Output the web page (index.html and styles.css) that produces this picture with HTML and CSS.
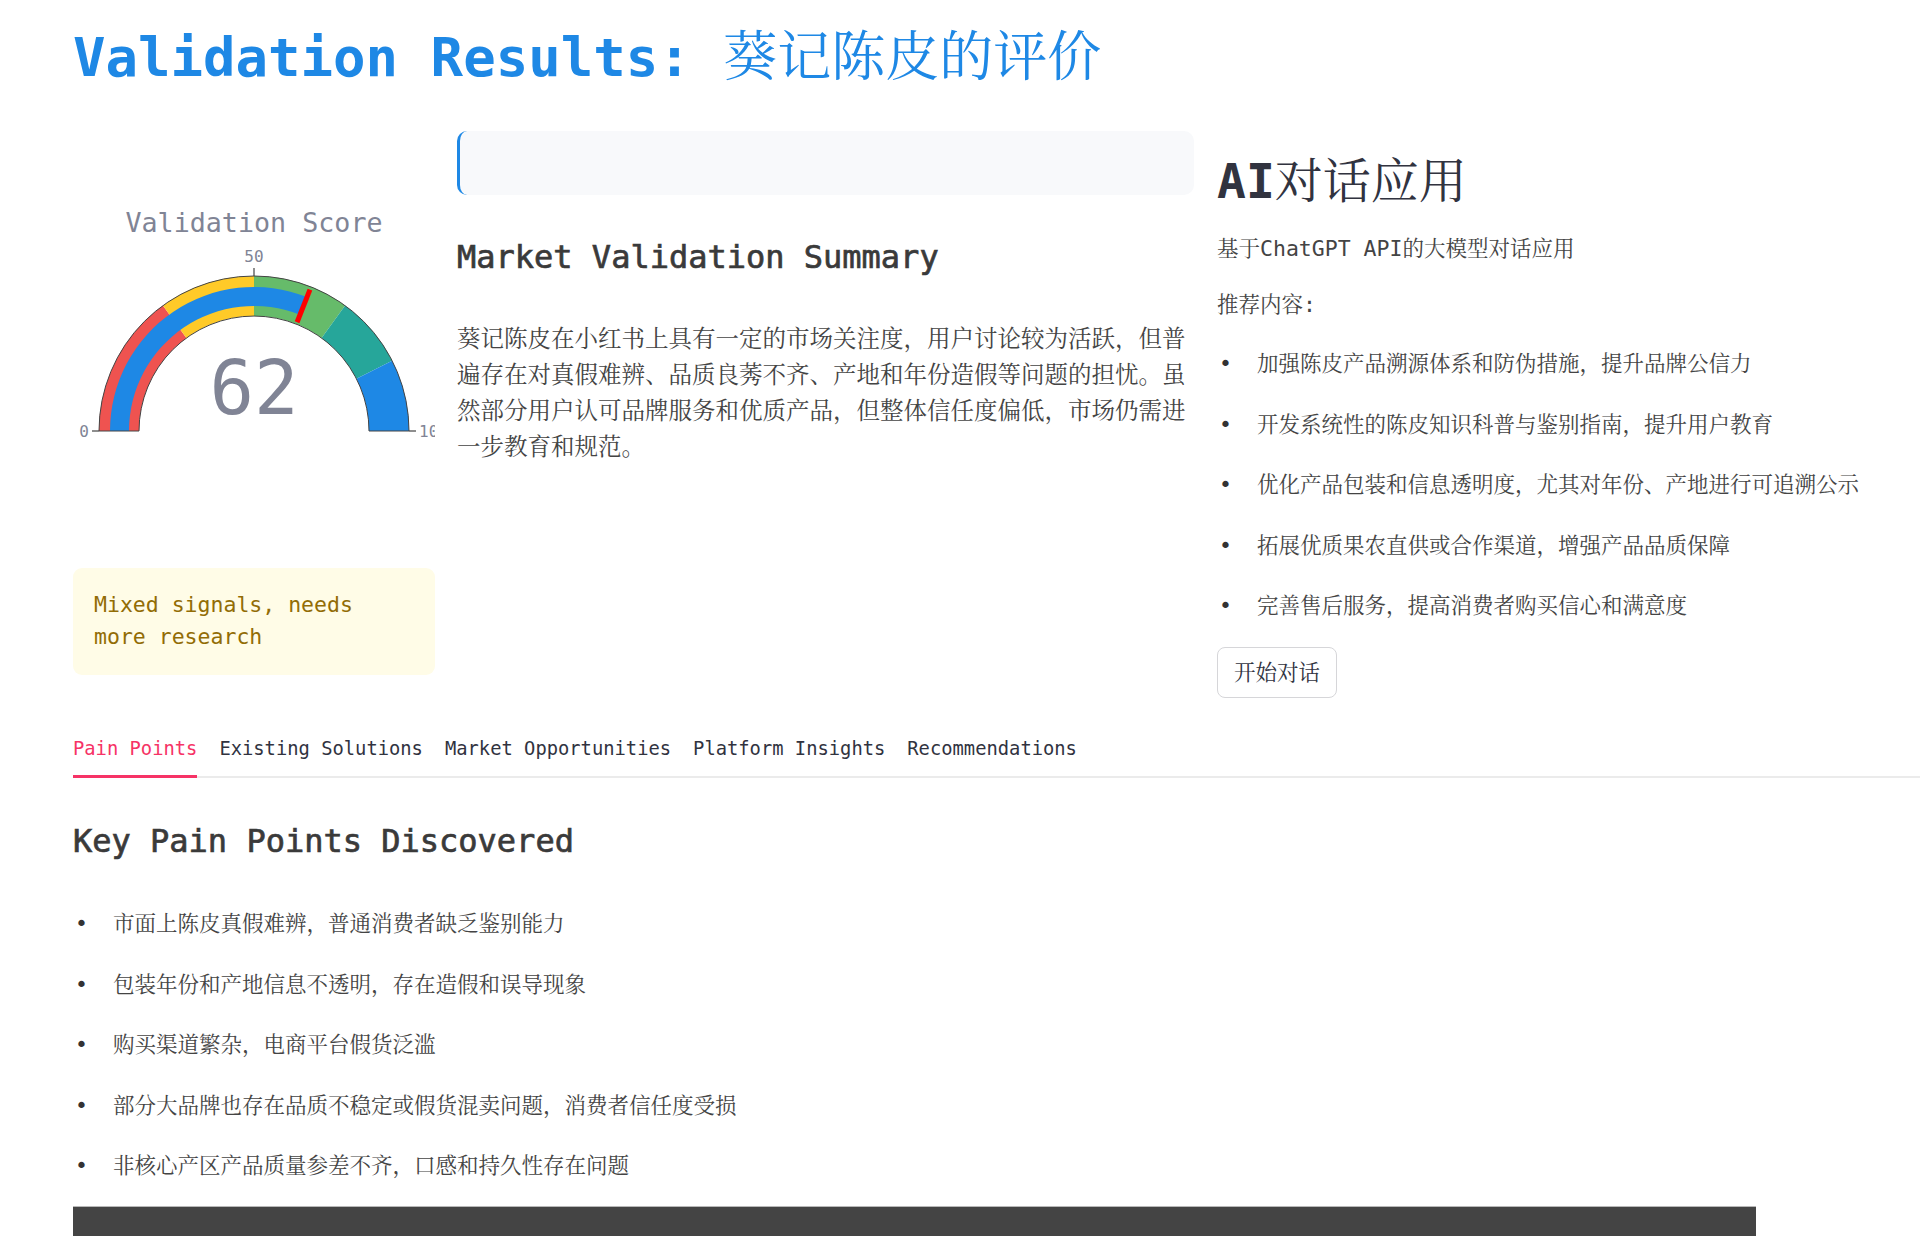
FILE: index.html
```html
<!DOCTYPE html>
<html lang="zh">
<head>
<meta charset="utf-8">
<title>Validation Results</title>
<link rel="stylesheet" href="styles.css">
</head>
<body>
<main class="page">
  <h1 class="title">Validation Results: <span class="cjk">葵记陈皮的评价</span></h1>

  <div class="row">
    <div class="col col-gauge">
      <svg class="gauge" width="362" height="420" viewBox="0 0 362 420" xmlns="http://www.w3.org/2000/svg">
        <text class="g-title" x="181" y="101" text-anchor="middle">Validation Score</text>
        <path d="M 26 300 A 155 155 0 0 1 89.89 174.6 L 113.4 206.96 A 115 115 0 0 0 66 300 Z" fill="#EF5350"/>
        <path d="M 89.89 174.6 A 155 155 0 0 1 181 145 L 181 185 A 115 115 0 0 0 113.4 206.96 Z" fill="#FFCA28"/>
        <path d="M 181 145 A 155 155 0 0 1 272.11 174.6 L 248.6 206.96 A 115 115 0 0 0 181 185 Z" fill="#66BB6A"/>
        <path d="M 272.11 174.6 A 155 155 0 0 1 319.11 229.63 L 283.47 247.79 A 115 115 0 0 0 248.6 206.96 Z" fill="#26A69A"/>
        <path d="M 319.11 229.63 A 155 155 0 0 1 336 300 L 296 300 A 115 115 0 0 0 283.47 247.79 Z" fill="#1E88E5"/>
        <path d="M 37 300 A 144 144 0 0 1 234.01 166.11 L 227.01 183.77 A 125 125 0 0 0 56 300 Z" fill="#1E88E5"/>
        <path d="M 26 300 A 155 155 0 0 1 336 300 L 296 300 A 115 115 0 0 0 66 300 Z" fill="none" stroke="#444" stroke-width="1"/>
        <line x1="224.07" y1="191.21" x2="236.95" y2="158.67" stroke="#ff0000" stroke-width="5"/>
        <line x1="19" y1="300" x2="26" y2="300" stroke="#444" stroke-width="1.2"/>
        <line x1="181" y1="137" x2="181" y2="145" stroke="#444" stroke-width="1.2"/>
        <line x1="336" y1="300" x2="343" y2="300" stroke="#444" stroke-width="1.2"/>
        <text class="g-tick" x="16" y="306" text-anchor="end">0</text>
        <text class="g-tick" x="181" y="131" text-anchor="middle">50</text>
        <text class="g-tick" x="346" y="306" text-anchor="start">100</text>
        <text class="g-value" x="181" y="283" text-anchor="middle">62</text>
      </svg>
      <div class="warn">Mixed signals, needs more research</div>
    </div>

    <div class="col col-summary">
      <div class="info-box"></div>
      <h3 class="section-title">Market Validation Summary</h3>
      <p class="summary">葵记陈皮在小红书上具有一定的市场关注度，用户讨论较为活跃，但普遍存在对真假难辨、品质良莠不齐、产地和年份造假等问题的担忧。虽然部分用户认可品牌服务和优质产品，但整体信任度偏低，市场仍需进一步教育和规范。</p>
    </div>

    <div class="col col-app">
      <h2 class="app-title">AI<span class="cjk">对话应用</span></h2>
      <p class="app-desc">基于ChatGPT API的大模型对话应用</p>
      <p class="app-label">推荐内容:</p>
      <ul class="bullets">
        <li>加强陈皮产品溯源体系和防伪措施，提升品牌公信力</li>
        <li>开发系统性的陈皮知识科普与鉴别指南，提升用户教育</li>
        <li>优化产品包装和信息透明度，尤其对年份、产地进行可追溯公示</li>
        <li>拓展优质果农直供或合作渠道，增强产品品质保障</li>
        <li>完善售后服务，提高消费者购买信心和满意度</li>
      </ul>
      <button class="btn" type="button">开始对话</button>
    </div>
  </div>

  <div class="tabs">
    <div class="tab active">Pain Points</div>
    <div class="tab">Existing Solutions</div>
    <div class="tab">Market Opportunities</div>
    <div class="tab">Platform Insights</div>
    <div class="tab">Recommendations</div>
  </div>

  <section class="tab-panel">
    <h3 class="section-title panel-title">Key Pain Points Discovered</h3>
    <ul class="bullets">
      <li>市面上陈皮真假难辨，普通消费者缺乏鉴别能力</li>
      <li>包装年份和产地信息不透明，存在造假和误导现象</li>
      <li>购买渠道繁杂，电商平台假货泛滥</li>
      <li>部分大品牌也存在品质不稳定或假货混卖问题，消费者信任度受损</li>
      <li>非核心产区产品质量参差不齐，口感和持久性存在问题</li>
    </ul>
    <div class="dark-bar"></div>
  </section>
</main>
</body>
</html>
```

FILE: styles.css
```css
html, body {
  margin: 0;
  padding: 0;
  background: #ffffff;
}

body {
  font-family: "DejaVu Sans Mono", "Noto Serif CJK SC", "Noto Sans CJK SC", monospace;
  color: #444444;
  font-size: 21.5px;
  line-height: 34px;
}

.page {
  padding: 0 0 0 73px;
  overflow: hidden;
}

.cjk {
  font-weight: 400;
}

.title {
  margin: 0;
  padding-top: 26px;
  font-size: 54px;
  line-height: 64px;
  font-weight: bold;
  color: #1e88e5;
  white-space: nowrap;
}

.row {
  display: flex;
  align-items: flex-start;
  margin-top: 41px;
}

.col-gauge {
  width: 362px;
  flex: none;
}

.col-summary {
  width: 737px;
  flex: none;
  margin-left: 22px;
}

.col-app {
  flex: 1;
  min-width: 0;
  margin-left: 23px;
}

.gauge {
  display: block;
  overflow: hidden;
}

.g-title {
  font-family: "DejaVu Sans Mono", monospace;
  font-size: 26.7px;
  fill: #808495;
}

.g-tick {
  font-family: "DejaVu Sans Mono", monospace;
  font-size: 16px;
  fill: #808495;
}

.g-value {
  font-family: "DejaVu Sans Mono", monospace;
  font-size: 74px;
  fill: #808495;
}

.warn {
  margin-top: 17px;
  padding: 21px 26px 22px 21px;
  background: #fffce7;
  color: #926c05;
  border-radius: 9px;
  line-height: 32px;
}

.info-box {
  height: 64px;
  background: #f8f9fb;
  border-left: 3px solid #1e88e5;
  border-radius: 10px;
}

.section-title {
  margin: 42px 0 0 0;
  font-size: 32px;
  line-height: 40px;
  font-weight: 400;
  -webkit-text-stroke: 0.7px #3a3a3a;
  color: #3a3a3a;
}

.summary {
  margin: 44px 0 0 0;
  font-size: 23.5px;
  line-height: 36px;
  color: #444444;
}

.app-title {
  margin: 21px 0 0 0;
  font-size: 48px;
  line-height: 58px;
  font-weight: bold;
  color: #31333f;
}

.app-desc {
  margin: 22px 0 0 0;
}

.app-label {
  margin: 22px 0 0 0;
}

.bullets {
  list-style: none;
  margin: 25px 0 0 0;
  padding: 0;
}

.bullets li {
  display: flex;
  margin-bottom: 26.5px;
  white-space: nowrap;
}

.bullets li:last-child {
  margin-bottom: 0;
}

.bullets li::before {
  content: "•";
  flex: none;
  width: 38px;
  padding-left: 2px;
  color: #333333;
}

.btn {
  display: block;
  margin-top: 24px;
  padding: 8px 16px;
  font-family: inherit;
  font-size: 21.5px;
  line-height: 33px;
  color: #31333f;
  background: #ffffff;
  border: 1px solid #d6d6d9;
  border-radius: 8px;
}

.tabs {
  display: flex;
  gap: 22px;
  margin-top: 37px;
  border-bottom: 2px solid #ebebeb;
}

.tab {
  font-size: 18.8px;
  line-height: 28px;
  padding-bottom: 12px;
  color: #31333f;
  white-space: nowrap;
}

.tab.active {
  color: #f63366;
  border-bottom: 3px solid #f63366;
  margin-bottom: -2px;
}

.panel-title {
  margin-top: 43px;
}

.tab-panel .bullets {
  margin-top: 46px;
}

.dark-bar {
  width: 1683px;
  height: 60px;
  margin-top: 23px;
  background: #444444;
  border-top: 1px solid #b8b8b8;
}
```
